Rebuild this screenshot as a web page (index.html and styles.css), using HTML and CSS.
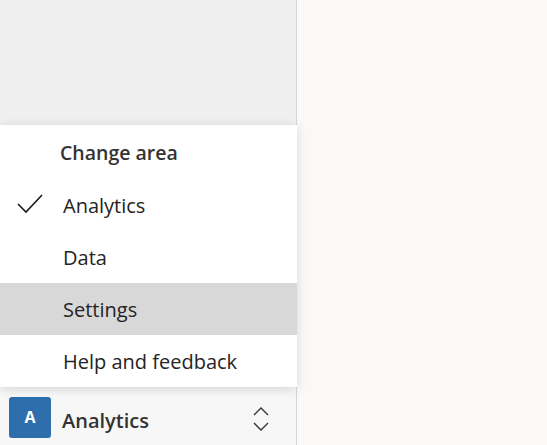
FILE: index.html
```html
<!DOCTYPE html>
<html>
<head>
<meta charset="utf-8">
<link rel="stylesheet" href="styles.css">
</head>
<body>
<div class="app">
  <aside class="sidebar">
    <div class="sidebar-body"></div>
    <div class="area-switch">
      <div class="avatar">A</div>
      <div class="area-name">Analytics</div>
      <svg class="updown" width="18" height="26" viewBox="0 0 18 26"><path d="M2 9 L9 2 L16 9 M2 17 L9 24 L16 17" fill="none" stroke="#333" stroke-width="1.4"/></svg>
    </div>
    <div class="menu">
      <div class="menu-header">Change area</div>
      <div class="menu-item"><svg class="check" width="26" height="22" viewBox="0 0 26 22"><path d="M1 11 L9 19 L25 2" fill="none" stroke="#1a1a1a" stroke-width="1.6"/></svg><span>Analytics</span></div>
      <div class="menu-item"><span>Data</span></div>
      <div class="menu-item active"><span>Settings</span></div>
      <div class="menu-item"><span>Help and feedback</span></div>
    </div>
  </aside>
  <main class="main"></main>
</div>
</body>
</html>
```
FILE: styles.css
```css
html, body { margin: 0; height: 100%; }
body { font-family: "Open Sans", "Noto Sans", sans-serif; color: #242424; }
.app { display: flex; height: 445px; }
.sidebar { position: relative; width: 296px; border-right: 1px solid #d6d6d6; background: #efefef; display: flex; flex-direction: column; }
.sidebar-body { flex: 1; }
.area-switch { height: 58px; background: #f7f7f7; display: flex; align-items: center; padding: 0 26px 0 9px; box-sizing: border-box; }
.avatar { width: 42px; height: 41px; border-radius: 3px; background: #2e6ead; color: #fff; font-weight: 700; font-size: 16px; display: flex; align-items: center; justify-content: center; margin-top: 2px; }
.area-name { flex: 1; margin-left: 11px; font-size: 20px; font-weight: 600; color: #333; margin-top: 8px; }
.updown { margin-top: 6px; }
.main { flex: 1; background: #faf9f8; }
.menu { position: absolute; left: 0; bottom: 58px; width: 297px; background: #fff; box-shadow: 0 2px 10px rgba(0,0,0,0.14); display: flex; flex-direction: column; }
.menu-header { height: 54px; display: flex; align-items: center; padding-left: 60px; font-size: 19.5px; font-weight: 600; color: #333; }
.menu-item { position: relative; height: 52px; display: flex; align-items: center; padding-left: 63px; font-size: 20px; color: #242424; }
.menu-item.active { background: #d8d8d8; }
.check { position: absolute; left: 17px; top: 14px; }
```
